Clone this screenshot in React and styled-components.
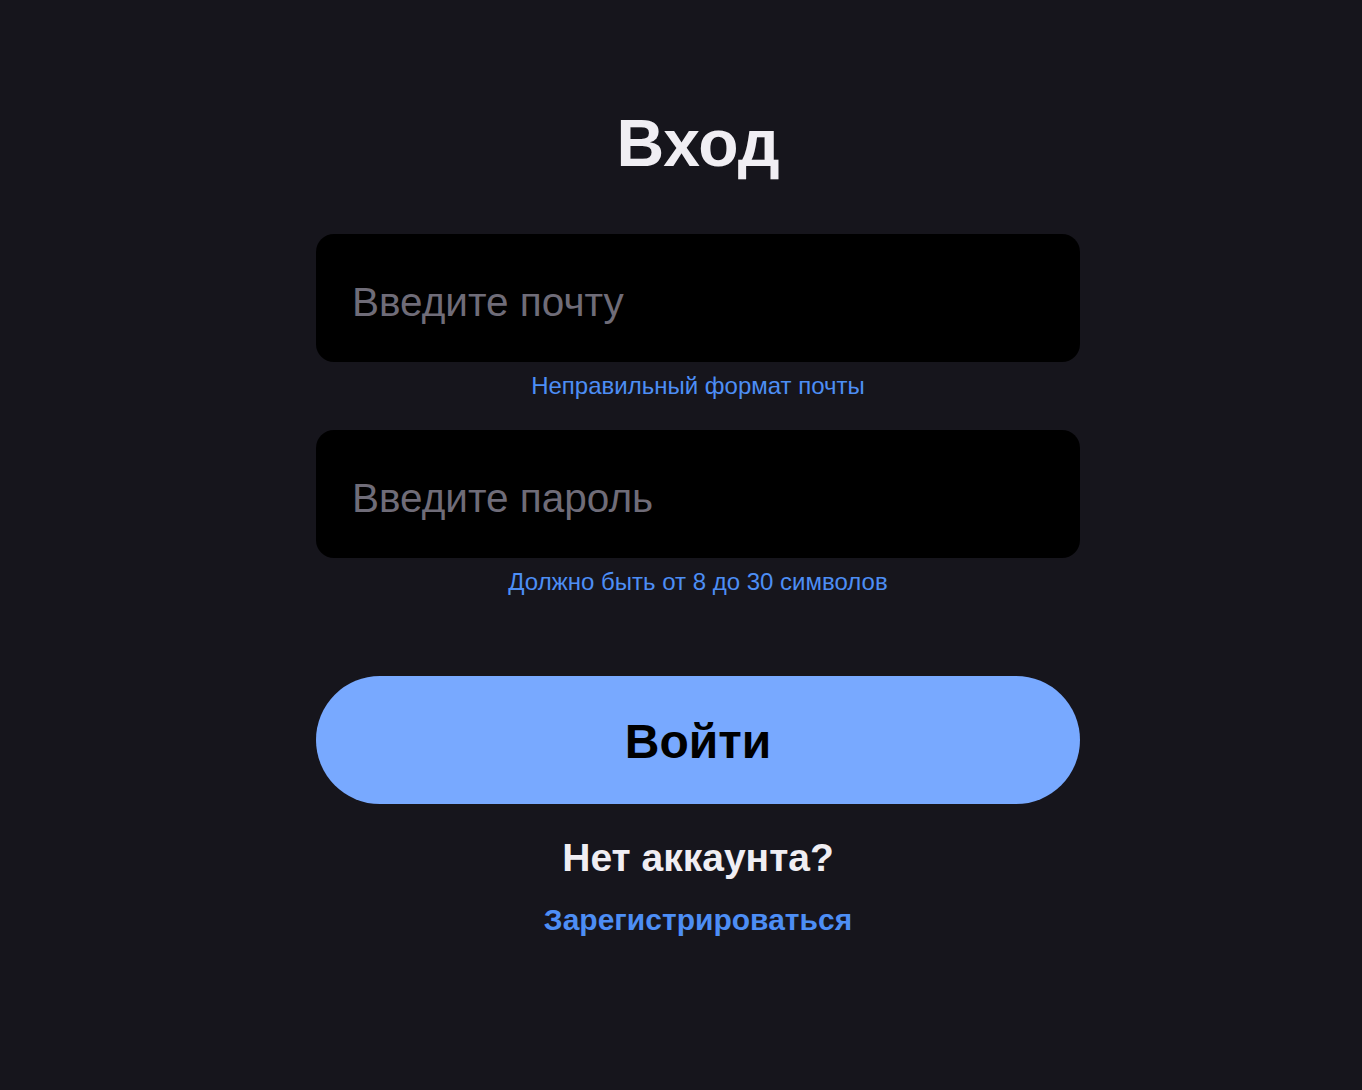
import styled, { createGlobalStyle } from 'styled-components';

const GlobalStyle = createGlobalStyle`
  body {
    margin: 0;
    background: #16151c;
    font-family: "Liberation Sans", Arial, sans-serif;
  }
`;

const Page = styled.div`
  min-height: 100vh;
  display: flex;
  flex-direction: column;
  align-items: center;
  padding: 102px 0 0 34px;
  box-sizing: border-box;
`;

const Title = styled.h1`
  margin: 0 0 50px;
  font-size: 66px;
  line-height: 82px;
  font-weight: 700;
  color: #f0eef3;
`;

const Form = styled.form`
  width: 764px;
  display: flex;
  flex-direction: column;
  align-items: center;
`;

const Input = styled.input`
  width: 100%;
  height: 128px;
  box-sizing: border-box;
  border: none;
  outline: none;
  border-radius: 18px;
  background: #000;
  padding: 9px 36px 0;
  font-family: inherit;
  font-size: 40.5px;
  color: #f0eef3;

  &::placeholder {
    color: #6f6c78;
  }
`;

const Hint = styled.div`
  margin: 10px 0 ${p => p.$gap}px;
  font-size: 24px;
  line-height: 28px;
  color: #4d8ef5;
`;

const Submit = styled.button`
  width: 100%;
  height: 128px;
  border: none;
  border-radius: 64px;
  background: #78a9ff;
  padding-top: 4px;
  font-family: inherit;
  font-size: 48px;
  font-weight: 700;
  color: #000;
  cursor: pointer;
`;

const Question = styled.div`
  margin-top: 30px;
  font-size: 39px;
  line-height: 48px;
  font-weight: 700;
  color: #f0eef3;
`;

const RegisterLink = styled.a`
  margin-top: 20px;
  font-size: 30px;
  line-height: 36px;
  font-weight: 700;
  color: #4d8ef5;
  text-decoration: none;
`;

export default function App() {
  return (
    <Page>
      <GlobalStyle />
      <Title>Вход</Title>
      <Form onSubmit={e => e.preventDefault()}>
        <Input type="email" placeholder="Введите почту" />
        <Hint $gap={30}>Неправильный формат почты</Hint>
        <Input type="password" placeholder="Введите пароль" />
        <Hint $gap={80}>Должно быть от 8 до 30 символов</Hint>
        <Submit type="submit">Войти</Submit>
        <Question>Нет аккаунта?</Question>
        <RegisterLink href="#">Зарегистрироваться</RegisterLink>
      </Form>
    </Page>
  );
}
